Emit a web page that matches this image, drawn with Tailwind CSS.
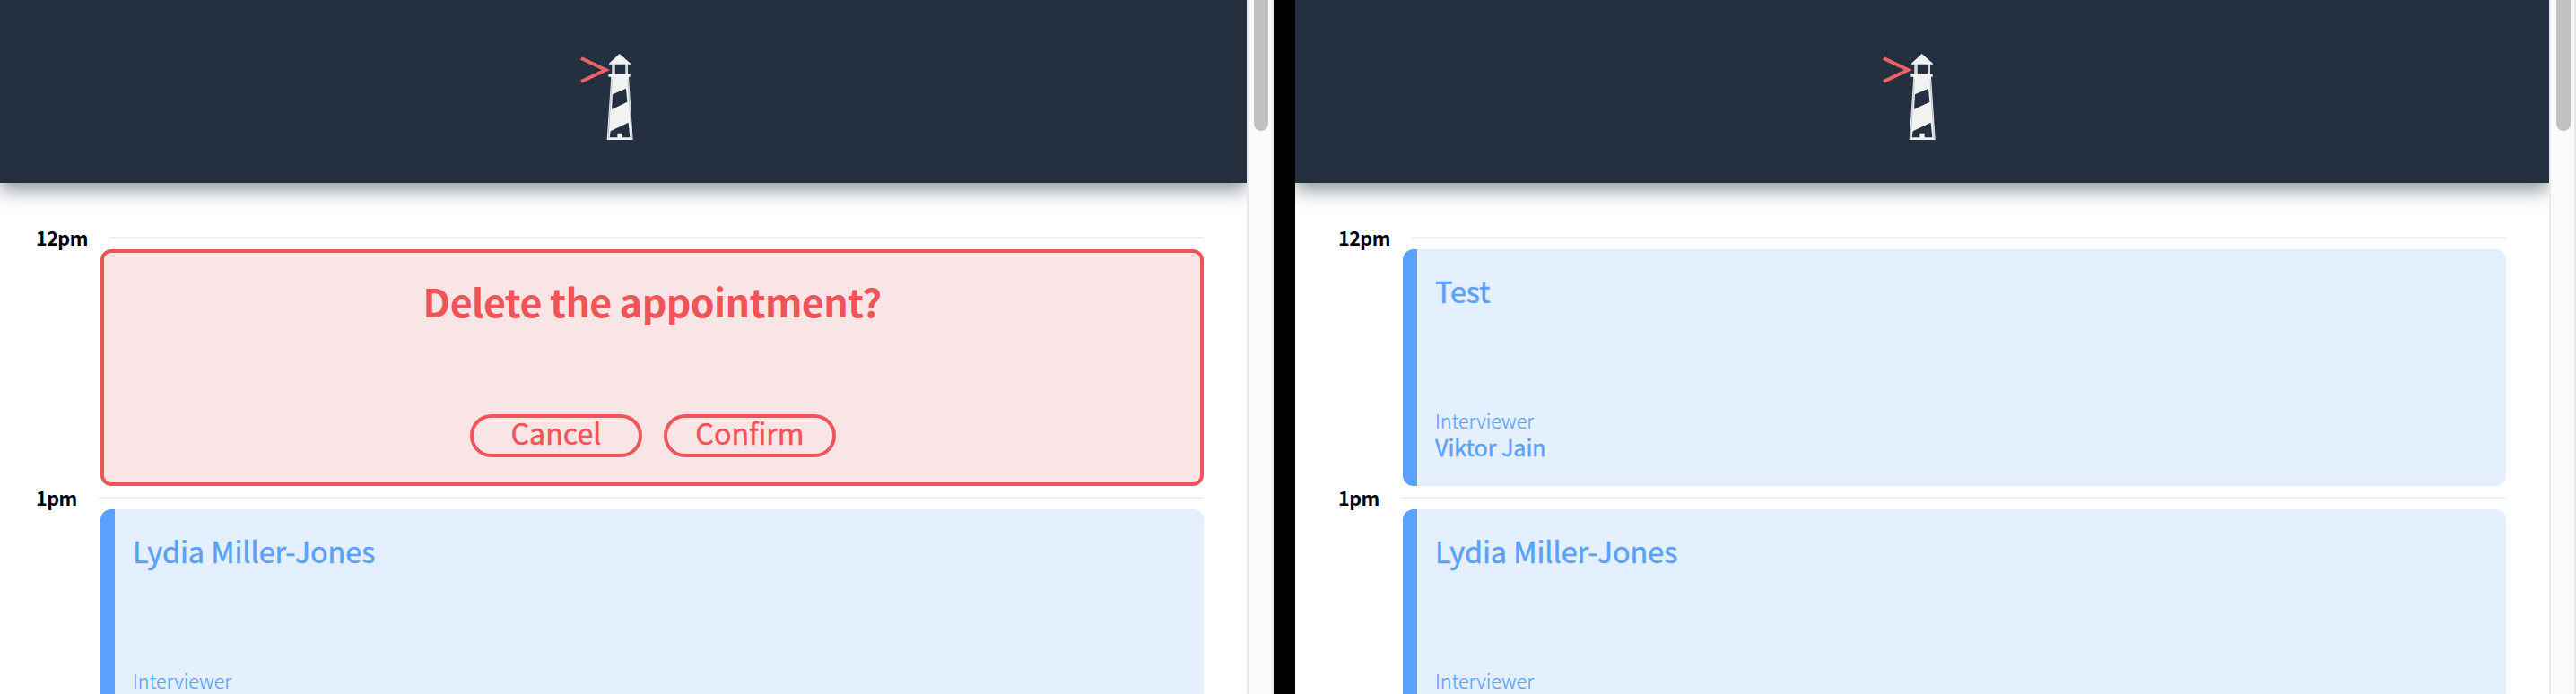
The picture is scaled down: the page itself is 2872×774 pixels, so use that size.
<!DOCTYPE html>
<html lang="en">
<head>
<meta charset="utf-8">
<title>Interview Scheduler</title>
<script src="https://cdn.jsdelivr.net/npm/@tailwindcss/browser@4"></script>
</head>
<body class="bg-black">
<svg class="hidden">
  <symbol id="logo" viewBox="0 0 360 390">
    <path d="M84 75 L166 114 L84 153" fill="none" stroke="#ee6166" stroke-width="12"/>
    <path fill="#f2f2f2" fill-rule="evenodd" d="M212 60 L249 92 V95 H240 V128 H248 V137 H243 L257 348 H170 L184 137 H175 V128 H187 V95 H177 V92 Z M197 95 V128 H232 V95 Z M189 196 L234 176 L238 221 L186 246 Z M182 319 L242 290 L247 340 H221 V326 H205 V340 H179 Z"/>
    <path d="M192 95 V128 M237 95 V128 M187 146 L174 344 M240 146 L253 344" fill="none" stroke="#8e959e" stroke-width="1.6"/>
  </symbol>
</svg>
<div class="flex h-[774px] w-[2872px] overflow-hidden bg-black font-['Noto_Sans_CJK_SC','Noto_Sans',sans-serif]">

  <!-- Left window: delete confirmation -->
  <section class="flex w-[1420px] shrink-0 bg-white">
    <div class="w-[1390px] overflow-hidden">
      <header class="h-[204px] bg-[#242f3f] pt-10 pl-[620px] shadow-[0_8px_20px_rgba(34,45,62,0.5)]">
        <svg class="h-[130px] w-[120px]"><use href="#logo"/></svg>
      </header>
      <main class="pt-12 pr-12 pl-10">
        <div class="flex h-[26px] items-center">
          <h4 class="w-[82px] text-[21.5px] leading-[26px] font-bold tracking-[-0.5px] text-black">12pm</h4>
          <hr class="grow border-t-2 border-[#f1f1f1]">
        </div>
        <article class="ml-[72px] flex h-[264px] flex-col items-center justify-between rounded-[12px] border-4 border-[#ee5458] bg-[#fae5e6] pt-[25px] pb-7 text-[#ee5458]">
          <h1 class="text-[43px] leading-[56px] font-bold tracking-[-0.62px]">Delete the appointment?</h1>
          <div class="flex gap-6 pl-0.5">
            <button class="h-12 w-48 rounded-full border-4 border-[#ee5458] pb-2 text-[32.2px] leading-8 [-webkit-text-stroke:0.5px]">Cancel</button>
            <button class="h-12 w-48 rounded-full border-4 border-[#ee5458] pb-2 text-[32.2px] leading-8 [-webkit-text-stroke:0.5px]">Confirm</button>
          </div>
        </article>
        <div class="flex h-[26px] items-center">
          <h4 class="w-[70px] text-[21.5px] leading-[26px] font-bold tracking-[-0.5px] text-black">1pm</h4>
          <hr class="grow border-t-2 border-[#f1f1f1]">
        </div>
        <article class="ml-[72px] flex h-[264px] overflow-hidden rounded-[12px] bg-[#e4f0fe] text-[#59a1fc]">
          <div class="w-4 bg-[#59a1fc]"></div>
          <div class="flex flex-col justify-between pt-[22px] pb-[60px] pl-5">
            <h2 class="text-[32.3px] leading-[48px] [-webkit-text-stroke:0.5px]">Lydia Miller-Jones</h2>
            <h4 class="text-[21.6px] leading-[26px] font-light [-webkit-text-stroke:0.2px]">Interviewer</h4>
          </div>
        </article>
      </main>
    </div>
    <div class="flex w-[30px] justify-center border-x-2 border-[#e8e8e8] bg-[#fafafa]">
      <div class="mr-0.5 ml-1 h-[146px] w-4 rounded-b-full bg-[#c1c1c1]"></div>
    </div>
  </section>

  <!-- Right window: booked appointments -->
  <section class="ml-6 flex w-[1428px] shrink-0 bg-white">
    <div class="w-[1398px] overflow-hidden">
      <header class="h-[204px] bg-[#242f3f] pt-10 pl-[628px] shadow-[0_8px_20px_rgba(34,45,62,0.5)]">
        <svg class="h-[130px] w-[120px]"><use href="#logo"/></svg>
      </header>
      <main class="pt-12 pr-12 pl-12">
        <div class="flex h-[26px] items-center">
          <h4 class="w-[82px] text-[21.5px] leading-[26px] font-bold tracking-[-0.5px] text-black">12pm</h4>
          <hr class="grow border-t-2 border-[#f1f1f1]">
        </div>
        <article class="ml-[72px] flex h-[264px] overflow-hidden rounded-[12px] bg-[#e4f0fe] text-[#59a1fc]">
          <div class="w-4 bg-[#59a1fc]"></div>
          <div class="flex flex-col justify-between pt-[22px] pb-[28px] pl-5">
            <h2 class="text-[32.3px] leading-[48px] [-webkit-text-stroke:0.5px]">Test</h2>
            <div>
              <h4 class="text-[21.6px] leading-[26px] font-light [-webkit-text-stroke:0.2px]">Interviewer</h4>
              <h3 class="text-[25px] leading-8 [-webkit-text-stroke:0.5px]">Viktor Jain</h3>
            </div>
          </div>
        </article>
        <div class="flex h-[26px] items-center">
          <h4 class="w-[70px] text-[21.5px] leading-[26px] font-bold tracking-[-0.5px] text-black">1pm</h4>
          <hr class="grow border-t-2 border-[#f1f1f1]">
        </div>
        <article class="ml-[72px] flex h-[264px] overflow-hidden rounded-[12px] bg-[#e4f0fe] text-[#59a1fc]">
          <div class="w-4 bg-[#59a1fc]"></div>
          <div class="flex flex-col justify-between pt-[22px] pb-[60px] pl-5">
            <h2 class="text-[32.3px] leading-[48px] [-webkit-text-stroke:0.5px]">Lydia Miller-Jones</h2>
            <h4 class="text-[21.6px] leading-[26px] font-light [-webkit-text-stroke:0.2px]">Interviewer</h4>
          </div>
        </article>
      </main>
    </div>
    <div class="flex w-[30px] justify-center border-x-2 border-[#e8e8e8] bg-[#fafafa]">
      <div class="mr-0.5 ml-1 h-[146px] w-4 rounded-b-full bg-[#c1c1c1]"></div>
    </div>
  </section>
</div>
</body>
</html>
